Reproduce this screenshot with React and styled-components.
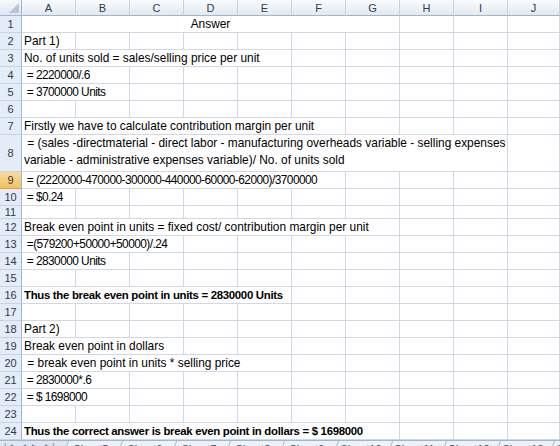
import React from "react";
import styled, { createGlobalStyle } from "styled-components";

const GlobalStyle = createGlobalStyle`
  html, body {
    margin: 0;
    padding: 0;
    background: #ffffff;
    overflow: hidden;
  }
  body {
    font-family: "Liberation Sans", Arial, sans-serif;
  }
`;

const Sheet = styled.div`
  width: 560px;
  height: 446px;
  overflow: hidden;
  display: flex;
  flex-direction: column;
`;

const Row = styled.div`
  display: grid;
  grid-template-columns: 22px repeat(9, 54px) 1fr;
  height: ${(p) => p.$h}px;
  flex: none;
`;

const Corner = styled.div`
  position: relative;
  background: linear-gradient(#f7f9fc, #dfe6f0);
  border-right: 1px solid #9eb6ce;
  border-bottom: 1px solid #9eb6ce;
`;

const ColHead = styled.div`
  display: flex;
  align-items: center;
  justify-content: center;
  background: linear-gradient(#f9fbfd, #e3e9f2);
  border-right: 1px solid #c5d3e3;
  border-bottom: 1px solid #9eb6ce;
  font-size: 11px;
  color: #2f3b4a;
`;

const RowHead = styled.div`
  display: flex;
  align-items: center;
  justify-content: center;
  background: ${(p) =>
    p.$active ? "linear-gradient(#f9d99f, #f1c15f)" : "#e4ecf7"};
  border-right: 1px solid #9eb6ce;
  border-bottom: 1px solid ${(p) => (p.$active ? "#f29536" : "#c5d3e3")};
  font-size: 11px;
  color: #2f3b4a;
`;

const Cell = styled.div`
  grid-column: span ${(p) => p.$span || 1};
  display: flex;
  align-items: center;
  justify-content: ${(p) => (p.$center ? "center" : "flex-start")};
  padding: 0 2px;
  border-right: 1px solid #d0d7e5;
  border-bottom: 1px solid #d0d7e5;
  font-size: ${(p) => (p.$bold ? "11.4px" : "11.9px")};
  font-weight: ${(p) => (p.$bold ? 700 : 400)};
  letter-spacing: ${(p) => (p.$bold ? "-0.3px" : p.$num ? "-0.55px" : "0")};
  color: #000;
  white-space: pre;
  overflow: hidden;
`;

const WrapCell = styled(Cell)`
  flex-direction: column;
  align-items: flex-start;
  justify-content: flex-start;
  line-height: 17px;
`;

const TabBar = styled.div`
  flex: none;
  height: 20px;
  display: flex;
  align-items: flex-start;
  background: #dfe6f1;
  border-top: 1px solid #9eb6ce;
`;

const Nav = styled.div`
  width: 60px;
  flex: none;
  display: flex;
  gap: 6px;
  padding: 1px 0 0 4px;
  font-size: 9px;
  color: #6a7f99;
`;

const Tab = styled.div`
  width: 53px;
  flex: none;
  height: 16px;
  display: flex;
  justify-content: center;
  padding-top: 2px;
  font-size: 11px;
  color: #3b4756;
  background: #eef2f8;
  border-left: 1px solid #a6b8cd;
  transform: skewX(-25deg);

  span {
    transform: skewX(25deg);
  }
`;

const rows = [
  { n: 1, span: 7, center: true, text: "Answer" },
  { n: 2, span: 1, text: "Part 1)" },
  { n: 3, span: 5, text: "No. of units sold = sales/selling price per unit" },
  { n: 4, span: 2, num: true, text: " = 2220000/.6" },
  { n: 5, span: 2, num: true, text: " = 3700000 Units" },
  { n: 6 },
  { n: 7, span: 6, text: "Firstly we have to calculate contribution margin per unit" },
  {
    n: 8,
    h: 37,
    span: 9,
    lines: [
      " = (sales -directmaterial - direct labor - manufacturing overheads variable - selling expenses",
      "variable - administrative expenses variable)/ No. of units sold",
    ],
  },
  {
    n: 9,
    span: 6,
    num: true,
    active: true,
    text: " = (2220000-470000-300000-440000-60000-62000)/3700000",
  },
  { n: 10, span: 1, num: true, text: " = $0.24" },
  { n: 11, h: 13 },
  { n: 12, span: 7, text: "Break even point in units = fixed cost/ contribution margin per unit" },
  { n: 13, span: 3, num: true, text: " =(579200+50000+50000)/.24" },
  { n: 14, span: 2, num: true, text: " = 2830000 Units" },
  { n: 15 },
  { n: 16, span: 5, bold: true, text: "Thus the break even point in units = 2830000 Units" },
  { n: 17 },
  { n: 18, span: 1, text: "Part 2)" },
  { n: 19, span: 3, text: "Break even point in dollars" },
  { n: 20, span: 5, text: " = break even point in units * selling price" },
  { n: 21, span: 2, num: true, text: " = 2830000*.6" },
  { n: 22, span: 2, num: true, text: " = $ 1698000" },
  { n: 23 },
  {
    n: 24,
    span: 7,
    bold: true,
    text: "Thus the correct answer is break even point in dollars = $ 1698000",
  },
];

const letters = ["A", "B", "C", "D", "E", "F", "G", "H", "I", "J"];

const CornerMark = () => (
  <svg width="10" height="10" style={{ position: "absolute", right: 2, bottom: 2 }}>
    <polygon points="10,0 10,10 0,10" fill="#b7c4d6" />
  </svg>
);

const SheetRow = ({ row }) => {
  const used = row.span || 0;
  const rest = 10 - used;
  return (
    <Row $h={row.h || 17}>
      <RowHead $active={row.active}>{row.n}</RowHead>
      {row.lines ? (
        <WrapCell $span={row.span}>
          {row.lines.map((l) => (
            <div key={l}>{l}</div>
          ))}
        </WrapCell>
      ) : used ? (
        <Cell
          $span={row.span}
          $center={row.center}
          $bold={row.bold}
          $num={row.num}
        >
          {row.text}
        </Cell>
      ) : null}
      {Array.from({ length: rest }).map((_, i) => (
        <Cell key={i} />
      ))}
    </Row>
  );
};

const sheetTabs = [
  "Sheet5",
  "Sheet6",
  "Sheet7",
  "Sheet8",
  "Sheet9",
  "Sheet10",
  "Sheet11",
  "Sheet12",
  "Sheet13",
  "Sheet14",
];

export default function App() {
  return (
    <>
      <GlobalStyle />
      <Sheet>
        <Row $h={16}>
          <Corner>
            <CornerMark />
          </Corner>
          {letters.map((l) => (
            <ColHead key={l}>{l}</ColHead>
          ))}
        </Row>
        {rows.map((r) => (
          <SheetRow key={r.n} row={r} />
        ))}
        <TabBar>
          <Nav>
            <span>|◀</span>
            <span>◀</span>
            <span>▶</span>
            <span>▶|</span>
          </Nav>
          {sheetTabs.map((t) => (
            <Tab key={t}>
              <span>{t}</span>
            </Tab>
          ))}
        </TabBar>
      </Sheet>
    </>
  );
}
